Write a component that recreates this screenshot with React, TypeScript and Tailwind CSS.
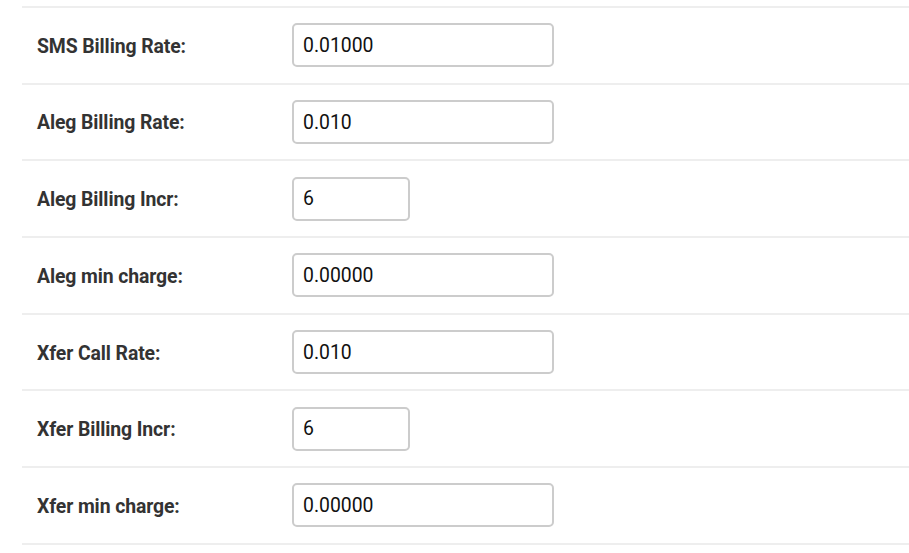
import React from 'react';

const rows: { label: string; value: string; small?: boolean }[] = [
  { label: 'SMS Billing Rate:', value: '0.01000' },
  { label: 'Aleg Billing Rate:', value: '0.010' },
  { label: 'Aleg Billing Incr:', value: '6', small: true },
  { label: 'Aleg min charge:', value: '0.00000' },
  { label: 'Xfer Call Rate:', value: '0.010' },
  { label: 'Xfer Billing Incr:', value: '6', small: true },
  { label: 'Xfer min charge:', value: '0.00000' },
];

const App: React.FC = () => {
  return (
    <div className="w-[909px] h-[553px] bg-white overflow-hidden font-['Roboto',sans-serif]">
      <div className="pl-[22px] pt-[6px]">
        <div className="border-b-2 border-[#eeeeee]">
          {rows.map((row, idx) => (
            <div
              key={idx}
              className="flex items-center h-[76.7px] border-t-2 border-[#eeeeee]"
            >
              <div className="w-[270px] pl-[15px] pt-[2px] text-[19.4px] font-bold text-[#333333] tracking-[-0.1px]">
                {row.label}
              </div>
              <input
                type="text"
                defaultValue={row.value}
                className={`${row.small ? 'w-[118px]' : 'w-[262px]'} h-[44px] pl-[9px] pr-[10px] text-[19.4px] text-[#111111] border-2 border-[#cccccc] rounded-[5px] outline-none`}
              />
            </div>
          ))}
        </div>
      </div>
    </div>
  );
};

export default App;
